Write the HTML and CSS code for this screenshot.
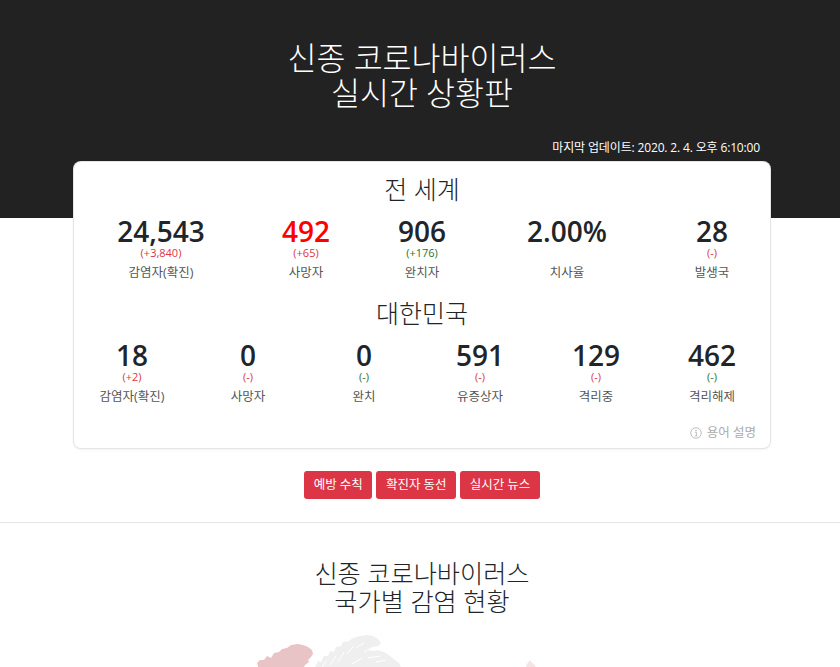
FILE: index.html
```html
<!DOCTYPE html>
<html lang="ko">

<head>
    <meta charset="UTF-8">
    <meta name="viewport" content="width=device-width, initial-scale=1.0">
    <title>신종 코로나바이러스 실시간 상황판</title>
    <link rel="stylesheet" href="styles.css">
</head>

<body>
    <header class="hero">
        <h1 class="hero-title">신종 코로나바이러스<br>실시간 상황판</h1>
        <p class="updated">마지막 업데이트: 2020. 2. 4. 오후 6:10:00</p>
    </header>

    <main class="board">
        <div class="card">
            <h2 class="card-title">전 세계</h2>
            <div class="stats">
                <div class="stat span-3">
                    <div class="num">24,543</div>
                    <div class="delta up">(+3,840)</div>
                    <div class="label">감염자(확진)</div>
                </div>
                <div class="stat span-2">
                    <div class="num red">492</div>
                    <div class="delta up">(+65)</div>
                    <div class="label">사망자</div>
                </div>
                <div class="stat span-2">
                    <div class="num">906</div>
                    <div class="delta good">(+176)</div>
                    <div class="label">완치자</div>
                </div>
                <div class="stat span-3">
                    <div class="num">2.00%</div>
                    <div class="delta">&nbsp;</div>
                    <div class="label">치사율</div>
                </div>
                <div class="stat span-2">
                    <div class="num">28</div>
                    <div class="delta up">(-)</div>
                    <div class="label">발생국</div>
                </div>
            </div>

            <h2 class="card-title second">대한민국</h2>
            <div class="stats">
                <div class="stat span-2">
                    <div class="num">18</div>
                    <div class="delta up">(+2)</div>
                    <div class="label">감염자(확진)</div>
                </div>
                <div class="stat span-2">
                    <div class="num">0</div>
                    <div class="delta up">(-)</div>
                    <div class="label">사망자</div>
                </div>
                <div class="stat span-2">
                    <div class="num">0</div>
                    <div class="delta good">(-)</div>
                    <div class="label">완치</div>
                </div>
                <div class="stat span-2">
                    <div class="num">591</div>
                    <div class="delta up">(-)</div>
                    <div class="label">유증상자</div>
                </div>
                <div class="stat span-2">
                    <div class="num">129</div>
                    <div class="delta up">(-)</div>
                    <div class="label">격리중</div>
                </div>
                <div class="stat span-2">
                    <div class="num">462</div>
                    <div class="delta good">(-)</div>
                    <div class="label">격리해제</div>
                </div>
            </div>

            <div class="glossary">
                <svg class="info-icon" viewBox="0 0 16 16" width="12" height="12" aria-hidden="true">
                    <circle cx="8" cy="8" r="7" fill="none" stroke="currentColor" stroke-width="1"></circle>
                    <circle cx="8" cy="4.6" r="0.9" fill="currentColor"></circle>
                    <path d="M6.6 7h1.9v4.6M6.4 11.8h3.4" fill="none" stroke="currentColor" stroke-width="1"></path>
                </svg>
                <span>용어 설명</span>
            </div>
        </div>

        <div class="links">
            <a class="btn" href="#">예방 수칙</a>
            <a class="btn" href="#">확진자 동선</a>
            <a class="btn" href="#">실시간 뉴스</a>
        </div>
    </main>

    <section class="map-section">
        <h2 class="map-title">신종 코로나바이러스<br>국가별 감염 현황</h2>
        <!-- top edge of the world map, rest is below the fold -->
        <svg class="map" viewBox="0 623 844 44" width="844" height="44" aria-hidden="true">
            <path class="land-hit" d="M257 663l3-3h4l3-4 4 2 3-5 5-1 3-3 5-1 4-3 7-1 5 1 5 2 4 3 1 4-2 3-3 3 1 2-4 3-2 4-3 3-2 3H262l-2-2z"></path>
            <path class="land" d="M314 669l4-8 3 1 3-6 4 0 2-5 4 1 2-5 5-1 2-4 6-1 4-3 7-2 7-1 6 1 5 3 3 4-3 3-6 1-4 3 5 1 5-1 6 2 6 4 5 4 4 3 2 4z"></path>
            <path class="inlet" d="M322 667l5-7M330 665l6-9M338 662l6-10M347 654l7-8M356 648l8-5M364 652l8-4M368 658l12-2M376 662l10-2M352 664l10-6"></path>
            <path class="land-faint" d="M525 669l2-5 3-4 2 3 2 1 2 3 1 2z"></path>
        </svg>
    </section>
</body>

</html>
```

FILE: styles.css
```css
html {
    overflow: hidden;
}

body {
    width: 844px;
    margin: 0;
    font-family: "Open Sans", "Noto Sans CJK KR", sans-serif;
    color: #212529;
    background-color: #fff;
}

.hero {
    height: 218px;
    box-sizing: border-box;
    padding-top: 40px;
    background-color: #222;
    color: #fff;
    text-align: center;
}

.hero-title {
    margin: 0;
    font-size: 31.5px;
    font-weight: 300;
    line-height: 35px;
}

.updated {
    width: 698px;
    box-sizing: border-box;
    margin: 29px auto 0;
    padding-right: 11px;
    font-size: 12px;
    letter-spacing: -0.15px;
    line-height: 18px;
    text-align: right;
}

.board {
    width: 698px;
    margin: -57px auto 0;
}

.card {
    height: 288px;
    box-sizing: border-box;
    padding-top: 10px;
    background-color: #fff;
    border: 1px solid rgba(0, 0, 0, 0.1);
    border-radius: 8px;
    box-shadow: 0 1px 3px rgba(0, 0, 0, 0.05);
}

.card-title {
    margin: 0;
    font-size: 25px;
    font-weight: 300;
    line-height: 34px;
    text-align: center;
}

.card-title.second {
    margin-top: 15px;
}

.stats {
    display: grid;
    grid-template-columns: repeat(12, 1fr);
    margin-top: 10px;
}

.span-2 {
    grid-column: span 2;
}

.span-3 {
    grid-column: span 3;
}

.stat {
    text-align: center;
}

.num {
    font-size: 28px;
    font-weight: 600;
    line-height: 31px;
}

.red {
    color: #f00;
}

.delta {
    font-size: 11px;
    line-height: 12px;
}

.up {
    color: #dc3545;
}

.good {
    color: #28752f;
}

.label {
    margin-top: 6px;
    font-size: 12.5px;
    line-height: 16px;
    color: #555;
}

.glossary {
    display: flex;
    justify-content: flex-end;
    align-items: center;
    gap: 5px;
    margin-top: 20px;
    padding-right: 14px;
    font-size: 12.5px;
    line-height: 16px;
    color: #aaa;
}

.links {
    display: flex;
    justify-content: center;
    gap: 4px;
    margin-top: 22px;
}

.btn {
    padding: 0 9.5px;
    font-size: 12.5px;
    line-height: 28px;
    color: #fff;
    text-decoration: none;
    background-color: #dc3545;
    border-radius: 3px;
}

.map-section {
    margin-top: 23px;
    padding-top: 36px;
    border-top: 1px solid #e5e5e5;
}

.map-title {
    margin: 0;
    font-size: 25.2px;
    font-weight: 300;
    line-height: 28px;
    text-align: center;
}

.map {
    display: block;
    margin-top: 8px;
}

.land {
    fill: #efefef;
}

.land-hit {
    fill: #e8c4c6;
}

.land-faint {
    fill: #f6e4e5;
}

.inlet {
    fill: none;
    stroke: #fff;
    stroke-width: 1;
}
```
